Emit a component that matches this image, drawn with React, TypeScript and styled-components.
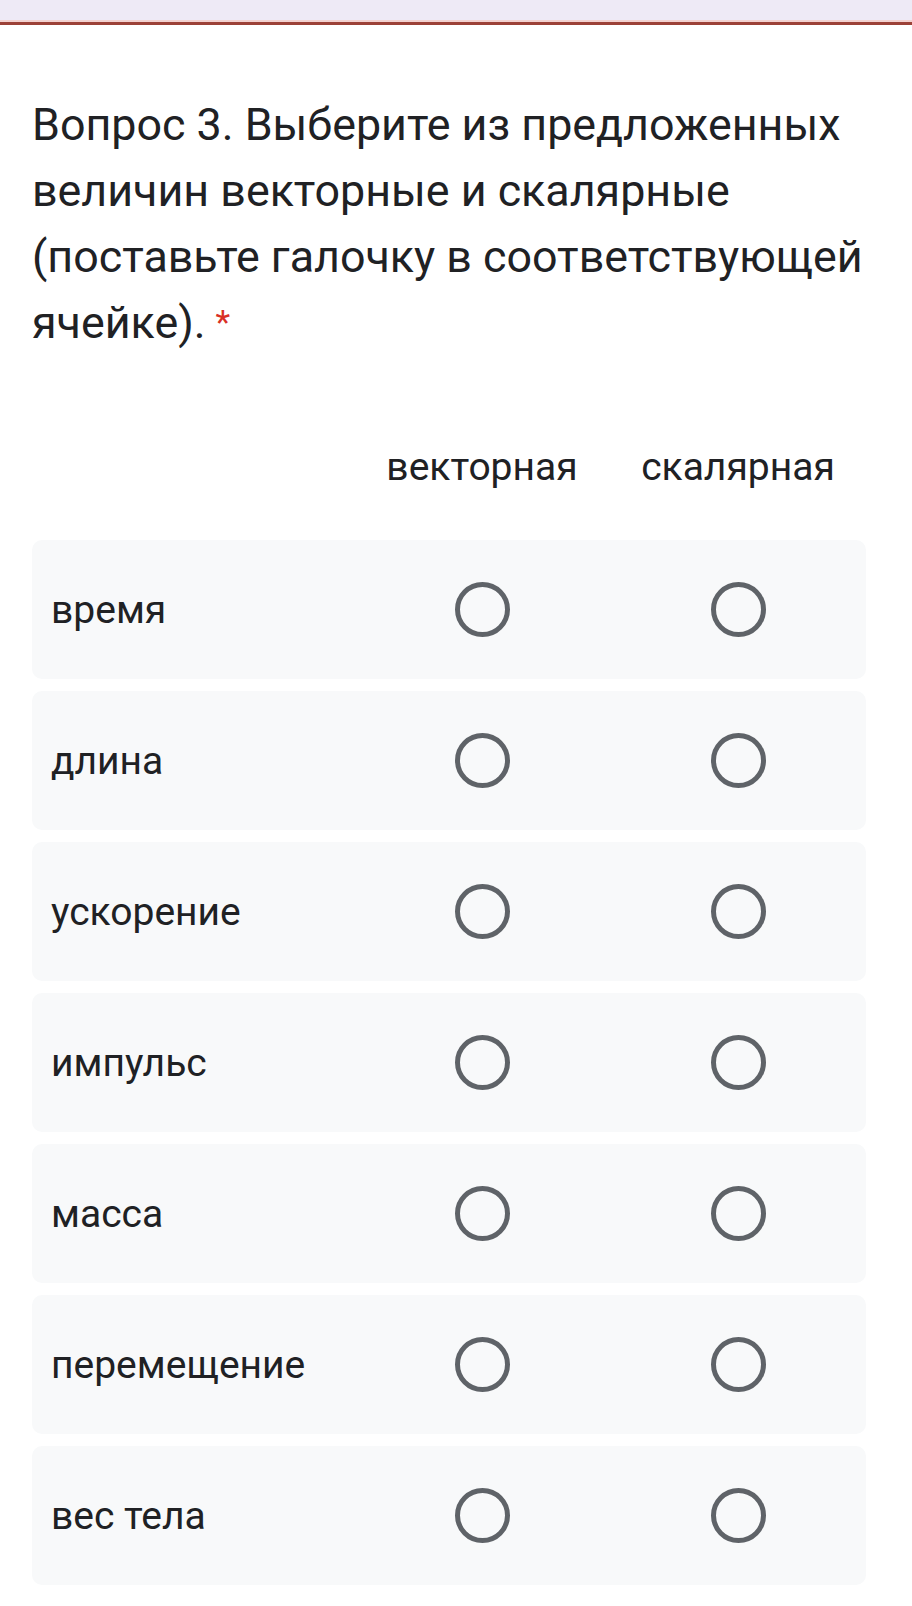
import styled, { createGlobalStyle } from 'styled-components';

const GlobalStyle = createGlobalStyle`
  html, body {
    margin: 0;
    padding: 0;
    background: #ffffff;
  }
  body {
    font-family: Roboto, "Noto Sans", "Liberation Sans", sans-serif;
    color: #202124;
  }
`;

const rows = ['время', 'длина', 'ускорение', 'импульс', 'масса', 'перемещение', 'вес тела'];
const columns = ['векторная', 'скалярная'];

const TopBar = styled.div`
  height: 20px;
  background: #eeeaf6;
  border-bottom: 2px solid #f3d2d0;
`;

const AccentLine = styled.div`
  height: 3px;
  background: #9c4238;
`;

const Page = styled.div`
  width: 912px;
  min-height: 1606px;
  background: #ffffff;
`;

const Content = styled.div`
  padding: 67px 46px 0 32px;
`;

const Title = styled.h1`
  margin: 0;
  font-size: 44.8px;
  font-weight: 400;
  line-height: 66px;
  letter-spacing: 0;
  color: #202124;
`;

const Required = styled.span`
  color: #d93025;
  margin-left: 10px;
  font-size: 34px;
  line-height: 1;
  vertical-align: 4px;
`;

const Grid = styled.div`
  margin-top: 89px;
  display: flex;
  flex-direction: column;
  gap: 12px;
`;

const GridRow = styled.div<{ $header?: boolean }>`
  display: grid;
  grid-template-columns: 1fr 256px 256px;
  align-items: center;
  height: ${(p) => (p.$header ? '45px' : '139px')};
  margin-bottom: ${(p) => (p.$header ? '38px' : '0')};
  background: ${(p) => (p.$header ? 'transparent' : '#f8f9fa')};
  border-radius: 10px;
`;

const ColumnHead = styled.div`
  text-align: center;
  font-size: 39px;
  line-height: 45px;
  color: #202124;
`;

const RowLabel = styled.div`
  padding-left: 19px;
  font-size: 39px;
  color: #202124;
`;

const Cell = styled.div`
  display: flex;
  justify-content: center;
  align-items: center;
`;

const Radio = styled.span`
  box-sizing: border-box;
  width: 55px;
  height: 55px;
  border-radius: 50%;
  border: 5.5px solid #5f6368;
`;

export default function App() {
  return (
    <Page>
      <GlobalStyle />
      <TopBar />
      <AccentLine />
      <Content>
        <Title>
          Вопрос 3. Выберите из предложенных величин векторные и скалярные (поставьте галочку в
          соответствующей ячейке).
          <Required>*</Required>
        </Title>
        <Grid>
          <GridRow $header>
            <div />
            {columns.map((c) => (
              <ColumnHead key={c}>{c}</ColumnHead>
            ))}
          </GridRow>
          {rows.map((r) => (
            <GridRow key={r}>
              <RowLabel>{r}</RowLabel>
              {columns.map((c) => (
                <Cell key={c}>
                  <Radio />
                </Cell>
              ))}
            </GridRow>
          ))}
        </Grid>
      </Content>
    </Page>
  );
}
